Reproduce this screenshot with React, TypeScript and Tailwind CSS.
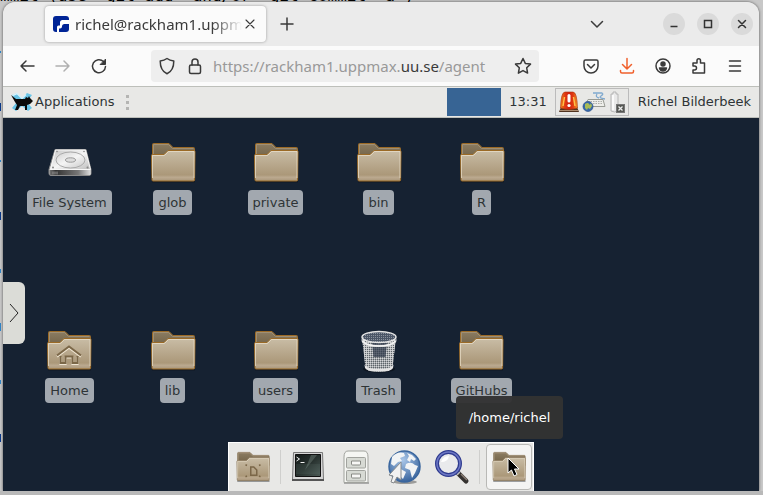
import type { ReactNode } from "react";

type Shortcut = { label: string; kind: "folder" | "home" | "drive" | "trash" };

const shortcuts: Shortcut[] = [
  { label: "File System", kind: "drive" },
  { label: "glob", kind: "folder" },
  { label: "private", kind: "folder" },
  { label: "bin", kind: "folder" },
  { label: "R", kind: "folder" },
  { label: "Home", kind: "home" },
  { label: "lib", kind: "folder" },
  { label: "users", kind: "folder" },
  { label: "Trash", kind: "trash" },
  { label: "GitHubs", kind: "folder" },
];

function Gradients() {
  return (
    <svg className="absolute size-0" aria-hidden="true">
      <defs>
        <linearGradient id="front" x1="0" y1="0" x2="0" y2="1">
          <stop offset="0" stopColor="#c9bda6" />
          <stop offset="0.8" stopColor="#ab9879" />
          <stop offset="0.88" stopColor="#bba98f" />
          <stop offset="1" stopColor="#a9967a" />
        </linearGradient>
        <linearGradient id="back" x1="0" y1="0" x2="0" y2="1">
          <stop offset="0" stopColor="#8b7c62" />
          <stop offset="1" stopColor="#6d5d41" />
        </linearGradient>
        <linearGradient id="steel" x1="0" y1="0" x2="1" y2="1">
          <stop offset="0" stopColor="#c4c4c4" />
          <stop offset="0.5" stopColor="#f5f5f5" />
          <stop offset="1" stopColor="#bdbdbd" />
        </linearGradient>
        <linearGradient id="driveFront" x1="0" y1="0" x2="1" y2="0">
          <stop offset="0" stopColor="#777" />
          <stop offset="0.15" stopColor="#333" />
          <stop offset="0.7" stopColor="#777" />
          <stop offset="1" stopColor="#ddd" />
        </linearGradient>
        <linearGradient id="can" x1="0" y1="0" x2="1" y2="0">
          <stop offset="0" stopColor="#d8d9da" />
          <stop offset="0.3" stopColor="#a0a4a8" />
          <stop offset="0.7" stopColor="#a0a4a8" />
          <stop offset="1" stopColor="#d8d9da" />
        </linearGradient>
        <pattern id="mesh" width="2" height="2" patternUnits="userSpaceOnUse">
          <rect width="1" height="1" fill="#5d6469" />
          <rect x="1" y="1" width="1" height="1" fill="#d5d6d8" />
        </pattern>
        <pattern id="meshDark" width="2" height="2" patternUnits="userSpaceOnUse">
          <rect width="2" height="2" fill="#4b5667" />
          <rect width="1" height="1" fill="#8b929d" />
        </pattern>
        <linearGradient id="screen" x1="0" y1="0" x2="1" y2="1">
          <stop offset="0" stopColor="#141a19" />
          <stop offset="0.5" stopColor="#28322f" />
          <stop offset="1" stopColor="#4c5b57" />
        </linearGradient>
        <radialGradient id="ocean" cx="0.45" cy="0.3" r="0.75">
          <stop offset="0" stopColor="#a9c6e8" />
          <stop offset="1" stopColor="#305d98" />
        </radialGradient>
        <linearGradient id="siren" x1="0" y1="0" x2="1" y2="0">
          <stop offset="0" stopColor="#f08a1c" />
          <stop offset="0.25" stopColor="#e23c12" />
          <stop offset="0.5" stopColor="#d02010" />
          <stop offset="0.75" stopColor="#e23c12" />
          <stop offset="1" stopColor="#f5a02a" />
        </linearGradient>
      </defs>
    </svg>
  );
}

function FolderShape({ outline = "#9b6a26" }: { outline?: string }) {
  return (
    <>
      <path d="M3 40.500h43" stroke="#0b1017" strokeOpacity="0.5" strokeWidth="2" />
      <path d="M3.500 3.500q0-1 1-1h15.500l4 4h20.500q1 0 1 1V20h-42z" fill="url(#back)" stroke={outline} />
      <path d="M4.500 19V3.500h15l4 4h21" fill="none" stroke="#a59579" strokeOpacity="0.8" />
      <path d="M2.500 14.500q0-1 1-1h11.500l4-4h26q1 0 1 1l-.4 28.500q0 1-1 1H4q-1 0-1-1z" fill="url(#front)" stroke={outline} />
      <path d="M3.500 37V14.500h12l4-4h25.500V37" fill="none" stroke="#e6dcc8" strokeOpacity="0.8" />
    </>
  );
}

function FolderIcon({ home = false }: { home?: boolean }) {
  return (
    <svg viewBox="0 0 48 44" className="h-11 w-12" aria-hidden="true">
      <FolderShape />
      {home && (
        <g fill="none">
          <path d="M12 27.500 24 18.500l12 9M15.500 28v7h5v-6.500h7V35h5v-7" stroke="#efe5d2" strokeWidth="2.200" />
          <path d="M12 26.500 24 17.500l12 9M15.500 27v7h5v-6.500h7V34h5v-7" stroke="#7b6748" strokeWidth="2" />
        </g>
      )}
    </svg>
  );
}

function DriveIcon() {
  return (
    <svg viewBox="0 0 48 44" className="h-11 w-12" aria-hidden="true">
      <path d="M9 8.500h31l5 20v4q0 2-2 2H5q-2 0-2-2v-4z" fill="#dcdcdc" stroke="#8b8b8b" />
      <path d="M9.500 9h30l5 19.500h-40z" fill="url(#steel)" stroke="#f7f7f7" />
      <ellipse cx="24.500" cy="19" rx="14.500" ry="8" fill="none" stroke="#aaa" />
      <ellipse cx="24.500" cy="19" rx="5" ry="2.200" fill="#ddd" stroke="#999" />
      <path d="M3.500 29h41v4.500q0 .5-1 .5h-39q-1 0-1-1z" fill="url(#driveFront)" />
      <path d="M7 30.500v3M9 30.500v3M11 30.500v3" stroke="#9b9b9b" />
      <circle cx="7" cy="26.500" r="1" fill="#888" />
      <circle cx="41.500" cy="26.500" r="1" fill="#888" />
      <circle cx="11" cy="10.500" r=".8" fill="#888" />
      <circle cx="38" cy="10.500" r=".8" fill="#888" />
    </svg>
  );
}

function TrashIcon() {
  return (
    <svg viewBox="0 0 48 44" className="h-11 w-12" aria-hidden="true">
      <ellipse cx="24" cy="40" rx="16" ry="3.500" fill="#0a0f18" opacity=".7" />
      <path d="M7 8l3.500 31q2 4 13.500 4t13.500-4L41 8z" fill="url(#can)" />
      <path d="M7 8l3.500 31q2 4 13.500 4t13.500-4L41 8z" fill="url(#mesh)" />
      <path d="M17 14h15l-1.500 14H18.500z" fill="#2c3648" opacity=".7" />
      <path d="M9.500 35.500q2 4.500 14.500 4.500t14.500-4.500l-.5 3.500q-2 3.500-14 3.500T10 39z" fill="#e4e4e4" />
      <path d="M6.500 8q0 8 17.500 8t17.500-8v4q-2 6-17.500 6T6.500 12z" fill="#c6c8ca" />
      <ellipse cx="24" cy="8" rx="17" ry="5.500" fill="url(#meshDark)" stroke="#e4e4e4" strokeWidth="1.500" />
      <path d="M7.500 12q4 5 16.500 5t16.500-5" fill="none" stroke="#f4f4f4" strokeWidth="1.500" />
    </svg>
  );
}

function ShortcutIcon({ kind }: { kind: Shortcut["kind"] }) {
  if (kind === "drive") return <DriveIcon />;
  if (kind === "trash") return <TrashIcon />;
  return <FolderIcon home={kind === "home"} />;
}

function Line({ children, className = "size-5", width = 1.5 }: { children: ReactNode; className?: string; width?: number }) {
  return (
    <svg viewBox="0 0 20 20" className={className} fill="none" stroke="currentColor" strokeWidth={width} strokeLinecap="round" strokeLinejoin="round" aria-hidden="true">
      {children}
    </svg>
  );
}

function ToolButton({ label, children, className = "" }: { label: string; children: ReactNode; className?: string }) {
  return (
    <button type="button" aria-label={label} className={`flex size-9 shrink-0 items-center justify-center ${className}`}>
      {children}
    </button>
  );
}

function TabStrip() {
  return (
    <div className="flex h-11 items-center bg-[#ebebeb] pr-1.5">
      <div className="ml-[42px] flex h-9 w-[221px] items-center rounded bg-[#fbfbfb] pr-2 pl-2 shadow-[0_0_3px_rgba(0,0,0,0.35)]">
        <svg viewBox="0 0 16 16" className="size-4 shrink-0" aria-hidden="true">
          <rect width="16" height="16" rx="3" fill="#002496" />
          <path d="M4 16v-5q0-1.500 1.500-1.500H7V6.500Q7 4 9.500 4H16v4h-4.500Q9 8 9 10.500q0 2-2 2H6V16z" fill="#fff" />
        </svg>
        <span className="ml-1.5 min-w-0 flex-1 overflow-hidden whitespace-nowrap [mask-image:linear-gradient(to_right,black_82%,transparent)]">richel@rackham1.uppmax.uu.se</span>
        <button type="button" aria-label="Close tab" className="flex size-4 shrink-0 items-center justify-center">
          <Line className="size-4" width={1.4}><path d="M5 5l10 10M15 5 5 15" /></Line>
        </button>
      </div>
      <ToolButton label="New tab" className="ml-[3px]"><Line><path d="M10 4v12M4 10h12" /></Line></ToolButton>
      <div className="flex-1" />
      <ToolButton label="List all tabs" className="mr-12"><Line><path d="m4.500 7.500 5.500 5.500 5.500-5.500" /></Line></ToolButton>
      <div className="flex gap-3 text-[#333]">
        <button type="button" aria-label="Minimize" className="flex size-[22px] items-center justify-center rounded-full bg-[#dadada]"><Line><path d="M6.500 12.500h7" strokeLinecap="butt" /></Line></button>
        <button type="button" aria-label="Maximize" className="flex size-[22px] items-center justify-center rounded-full bg-[#dadada]"><Line><path d="M6.500 6.500h7v7h-7z" strokeLinejoin="miter" /></Line></button>
        <button type="button" aria-label="Close window" className="flex size-[22px] items-center justify-center rounded-full bg-[#dadada]"><Line><path d="m6.500 6.500 7 7m0-7-7 7" /></Line></button>
      </div>
    </div>
  );
}

function AddressBar() {
  return (
    <div className="flex h-10 items-center bg-[#fbfbfb] pr-1.5 pl-1.5">
      <ToolButton label="Back"><Line><path d="M17 10H4m5-5-5 5 5 5" /></Line></ToolButton>
      <ToolButton label="Forward" className="text-[#b0b0b0]"><Line><path d="M3 10h13m-5-5 5 5-5 5" /></Line></ToolButton>
      <ToolButton label="Reload">
        <Line><path d="M16.500 10.500A6.500 6.500 0 1 1 14.500 5.500" /><path d="M16.500 3.500v5h-5z" fill="currentColor" strokeWidth="1" /></Line>
      </ToolButton>
      <div className="ml-[34px] flex h-8 flex-1 items-center rounded bg-[#eeeeee] pr-1.5 pl-1.5">
        <Line><path d="M10 2.500c2 1.500 4 2.200 6.800 2.500C16.800 11 15 15.500 10 17.800 5 15.500 3.200 11 3.200 5 6 4.700 8 4 10 2.500z" /></Line>
        <span className="ml-2"><Line><rect x="4.500" y="9" width="11" height="8.500" rx="1.500" /><path d="M7 9V6a3 3 0 0 1 6 0v3" /></Line></span>
        <a href="#agent" className="ml-2 min-w-0 flex-1 whitespace-nowrap text-[#999]">https://rackham1.uppmax.<span className="text-[#3a3a3a]">uu.se</span>/agent</a>
        <button type="button" aria-label="Bookmark this page">
          <Line><path d="m10 2.500 2.300 4.900 5.200.7-3.800 3.700.9 5.300-4.600-2.500-4.600 2.500.9-5.300-3.800-3.700 5.200-.7z" /></Line>
        </button>
      </div>
      <ToolButton label="Save to Pocket" className="ml-[34px]"><Line><path d="M4.500 4h11q1.500 0 1.500 1.500V10a7 7 0 0 1-14 0V5.500Q3 4 4.500 4zM6.500 8.500 10 12l3.500-3.500" /></Line></ToolButton>
      <ToolButton label="Downloads" className="text-[#f0602c]"><Line><path d="M10 2.500v10M5.500 8.500 10 13l4.500-4.500M3.500 14.500v1q0 1.500 1.500 1.500h10q1.500 0 1.500-1.500v-1" /></Line></ToolButton>
      <ToolButton label="Account">
        <Line><circle cx="10" cy="10" r="7" /><circle cx="10" cy="8" r="2" fill="currentColor" /><path d="M6.500 12h7q-.5 3-3.500 3t-3.500-3z" fill="currentColor" /></Line>
      </ToolButton>
      <ToolButton label="Extensions"><Line><path d="M4 7h4V4.500a1.500 1.500 0 0 1 3.500 0V7h4v10H4v-3h1.500a1.500 1.500 0 0 0 0-4H4z" /></Line></ToolButton>
      <ToolButton label="Open application menu"><Line><path d="M4.500 5h11M4.500 10h11M4.500 15h11" /></Line></ToolButton>
    </div>
  );
}

function TrayIcons() {
  return (
    <div className="flex h-7 w-[74px] items-center justify-center gap-0.5 border border-[#bbb] px-0.5">
      <svg viewBox="0 0 22 24" className="h-6 w-[22px]" aria-label="Alert" role="img">
        <path d="M3 17 1 22h20l-2-5z" fill="#51331f" />
        <path d="M2 20.500h18" stroke="#aa8a6e" />
        <path d="M2.500 18Q3 2 7 2h8q4 0 4.500 16-8.500 3-17 0z" fill="url(#siren)" stroke="#a83010" strokeWidth=".6" />
        <path d="M5 16 6.500 7M17 16 15.500 7" stroke="#ffc04a" strokeWidth="1.500" />
        <rect x="9.500" y="4" width="3" height="8.500" rx="1.500" fill="#fff" />
        <circle cx="11" cy="15.500" r="1.600" fill="#fff" />
      </svg>
      <svg viewBox="0 0 24 24" className="size-6" aria-label="Keyboard" role="img">
        <path d="M11 3h9q2 1-1 3t4 3M15 4q-2 3 2 4" fill="none" stroke="#7fa9cf" strokeWidth="1.300" />
        <path d="M6 9.500h15l2 7H3z" fill="#eeeeea" stroke="#999b94" />
        <path d="M6 11.500h15M6 13.500h15" stroke="#adafa9" strokeDasharray="1.500 1" />
        <circle cx="6" cy="16.500" r="5" fill="#3669ab" stroke="#2c508a" strokeWidth=".7" />
        <path d="M3 14q3-2 4 0t2-1l1 3-2 3-2-1-1 2-2-2z" fill="#a9bb55" />
      </svg>
      <svg viewBox="0 0 18 24" className="h-6 w-[18px]" aria-label="Battery" role="img">
        <path d="M5 2h3v2h2v17q-3.500 2-7 0V4h2z" fill="#e9e9e9" stroke="#aaa" strokeWidth=".8" />
        <path d="M5 5v15" stroke="#fff" strokeWidth="1.500" />
        <rect x="8.500" y="14.500" width="8" height="8" fill="#555753" stroke="#777" />
        <path d="m10.500 16.500 4 4m0-4-4 4" stroke="#eee" strokeWidth="1.300" />
      </svg>
    </div>
  );
}

function DesktopPanel() {
  return (
    <div className="flex h-8 items-center border-t border-b border-[#bdbfba] bg-[#e8e8e6] pr-2 pl-2 font-['DejaVu_Sans',sans-serif] text-[13px] text-[#2e3436]">
      <button type="button" className="flex items-center gap-0.5">
        <svg viewBox="0 0 22 22" className="size-[22px]" aria-hidden="true">
          <path d="m1 4 5-2 5 5 5-5 5 2-5 7 5 6-4 3-6-5-6 5-4-3 5-6z" fill="#69c4e6" />
          <path d="M1.500 4.500 6 2.500l5 5 4-4" fill="none" stroke="#d8f1fa" strokeWidth="1.500" />
          <path d="m0 4 5 4h9l1-2 2 1 1-2 1 2 3 3-3 3-3 1v5h-2v-4H9l-2 4H4l2-5-2-3z" fill="#0a0a0a" />
        </svg>
        Applications
      </button>
      <div className="ml-3 flex flex-col gap-[3px]" aria-hidden="true">
        <span className="size-[3px] bg-[#b5b5b3]" />
        <span className="size-[3px] bg-[#b5b5b3]" />
        <span className="size-[3px] bg-[#b5b5b3]" />
      </div>
      <div className="flex-1" />
      <button type="button" aria-label="Workspace 1" className="h-7 w-[54px] bg-[#376494]" />
      <time className="mr-2 ml-2">13:31</time>
      <TrayIcons />
      <button type="button" className="ml-[9px] whitespace-nowrap">Richel Bilderbeek</button>
    </div>
  );
}

function DockFolder({ badge = false }: { badge?: boolean }) {
  return (
    <svg viewBox="0 0 48 44" className="h-9 w-9" aria-hidden="true">
      <FolderShape outline="#8d7b5f" />
      {badge && <path d="M21 22h4l4 4v7h-8zM14 19l2 1M34 19l-2 1M14 35l2-1M34 35l-2-1" fill="none" stroke="#7b6748" strokeWidth="2" />}
    </svg>
  );
}

function Dock() {
  return (
    <nav aria-label="Dock" className="mx-auto flex h-[49px] w-[306px] items-center border border-b-0 border-white bg-[#e8e8e6] [&>button]:flex [&>button]:h-[46px] [&>button]:items-center [&>button]:justify-center">
      <button type="button" aria-label="Directory menu" className="w-12"><DockFolder badge /></button>
      <span className="mx-[3px] h-[34px] w-px bg-[#cfcfcd]" />
      <button type="button" aria-label="Terminal Emulator" className="w-12">
        <svg viewBox="0 0 34 34" className="size-[34px]" aria-hidden="true">
          <path d="M2.500 2.500h29l1 27h-31z" fill="#d6d6d6" stroke="#777" />
          <path d="M4.500 4.500h25v22h-25z" fill="url(#screen)" stroke="#111" />
          <path d="m20 5-6 15 12-15z" fill="#71807a" opacity=".45" />
          <path d="m5.500 7 3 2-3 2M9.500 12.500h4" fill="none" stroke="#f3f3f3" />
          <path d="M5 15h24M5 17h24M5 19h24M5 21h24M5 23h24" stroke="#7b918a" strokeOpacity=".25" />
          <path d="M1 30h32" stroke="#555" strokeWidth="2" />
        </svg>
      </button>
      <button type="button" aria-label="File Manager" className="w-12">
        <svg viewBox="0 0 34 36" className="h-9 w-[34px]" aria-hidden="true">
          <path d="M5 34h25" stroke="#aaa" strokeWidth="2" />
          <path d="M5 8q0-6 4-6h16q4 0 4 6v25.500H5z" fill="#f5f6f3" stroke="#a1a39e" />
          <rect x="7.500" y="8.500" width="19" height="10.500" rx="1" fill="#d7dad4" stroke="#a1a39e" />
          <rect x="7.500" y="21.500" width="19" height="10.500" rx="1" fill="#d7dad4" stroke="#a1a39e" />
          <path d="M12.500 12v3q0 1 1 1h7q1 0 1-1v-3zM12.500 25v3q0 1 1 1h7q1 0 1-1v-3z" fill="#f7f7f5" stroke="#888a85" />
        </svg>
      </button>
      <button type="button" aria-label="Web Browser" className="w-12">
        <svg viewBox="0 0 36 36" className="size-9" aria-hidden="true">
          <ellipse cx="19" cy="33" rx="12" ry="2" fill="#9c9c9a" />
          <circle cx="18.500" cy="17.500" r="15.500" fill="url(#ocean)" stroke="#3a669e" strokeWidth="1.500" />
          <path d="M6 8q5-6 12-4l1 3-5 2 2 3-4 1-4 4-3-2zM21 4l5 2 4 4-2 2-3-2-1 3-3-2 2-4zM20 15q5-3 9 1l3 1-3 7-3 5-2-8-5-2zM13 19l7 4-3 7-3-3z" fill="#f2f4f5" />
          <path d="M15 13v18l-4-3-3 6-3-1 2-6-4-1z" fill="#f1f1f1" stroke="#85898c" />
        </svg>
      </button>
      <button type="button" aria-label="Application Finder" className="w-12">
        <svg viewBox="0 0 36 36" className="size-9" aria-hidden="true">
          <path d="m24 24 8 8" stroke="#34312f" strokeWidth="5" strokeLinecap="round" />
          <path d="m27 25 6 6" stroke="#897d73" strokeWidth="1.500" />
          <path d="m21 21 4 4" stroke="#bbb" strokeWidth="4" />
          <circle cx="14.500" cy="14.500" r="11.500" fill="#e9eaec" stroke="#2f3b8f" strokeWidth="4" />
          <circle cx="14.500" cy="14.500" r="11.500" fill="none" stroke="#6d78c5" strokeWidth="1.500" />
          <path d="M7 13q2-6 8-6-1 6-8 6z" fill="#fff" />
        </svg>
      </button>
      <span className="mx-[3px] h-[34px] w-px bg-[#cfcfcd]" />
      <button type="button" aria-label="Home folder" className="relative mr-px ml-auto w-[46px] rounded border border-[#b9b9b6] bg-[#f4f4f3]">
        <DockFolder />
        <svg viewBox="0 0 14 20" className="absolute top-3 left-5 h-5 w-3.5" aria-hidden="true">
          <path d="M1 1v15l3.500-3 2.500 6 3-1.500L7.500 12H12z" fill="#000" stroke="#fff" />
        </svg>
      </button>
    </nav>
  );
}

function Desktop() {
  return (
    <main className="relative flex flex-1 flex-col justify-between overflow-hidden bg-[#162232] font-['DejaVu_Sans',sans-serif] text-[13px]">
      <ul className="grid w-[530px] grid-cols-5 gap-y-[114px] pt-[23px] pl-[15px]">
        {shortcuts.map(({ label, kind }) => (
          <li key={label} className="flex justify-center">
            <button type="button" className="flex flex-col items-center gap-[5px] text-[#2e3436]">
              <ShortcutIcon kind={kind} />
              <span className="h-[25px] rounded bg-[#a2a8af] px-[5px] leading-[25px] whitespace-nowrap">{label}</span>
            </button>
          </li>
        ))}
      </ul>
      <button type="button" aria-label="Open session toolbar" className="absolute top-[164px] left-0 flex h-[62px] w-[22px] items-center justify-center rounded-r-md bg-[#dbdcd7] text-[#222]">
        <svg viewBox="0 0 10 20" className="h-5 w-2.5" fill="none" stroke="currentColor" aria-hidden="true"><path d="m1 1 8 9-8 9" /></svg>
      </button>
      <Dock />
      <div role="tooltip" className="absolute top-[278px] left-[453px] flex h-[43px] w-[107px] items-center justify-center rounded bg-[#333333]/97 text-white">/home/richel</div>
    </main>
  );
}

export default function App() {
  return (
    <div className="flex h-screen flex-col overflow-hidden bg-[#c8c8c8] font-['Noto_Sans',sans-serif] text-[15px] text-[#3a3a3a]">
      <Gradients />
      <div aria-hidden="true" className="flex h-0.5 shrink-0 items-end overflow-hidden font-['DejaVu_Sans_Mono',monospace] text-base leading-5 whitespace-pre text-black">
        <span className="-mb-1">{'mmit (use "git add" and/or "git commit -a")'}</span>
      </div>
      <div className="flex min-h-0 flex-1">
        <div aria-hidden="true" className="flex w-[3px] shrink-0 flex-col items-start justify-evenly">
          <span className="h-0.5 w-px bg-[#2f86c9]" />
          <span className="h-2 w-px bg-[#0a3a8c]" />
          <span className="h-0.5 w-px bg-[#2f86c9]" />
          <span className="h-2 w-px bg-[#0a3a8c]" />
          <span className="h-1 w-px bg-[#2f86c9]" />
          <span className="h-2 w-px bg-[#2f86c9]" />
          <span className="h-1 w-px bg-[#2f86c9]" />
          <span className="h-2 w-px bg-[#0a3a8c]" />
        </div>
        <div className="mr-1 flex min-w-0 flex-1 flex-col overflow-hidden rounded-t-xl shadow-[0_0_3px_rgba(0,0,0,0.6)]">
          <TabStrip />
          <AddressBar />
          <DesktopPanel />
          <Desktop />
        </div>
      </div>
      <div className="h-1 shrink-0 bg-[#b9b9b9]" />
    </div>
  );
}
